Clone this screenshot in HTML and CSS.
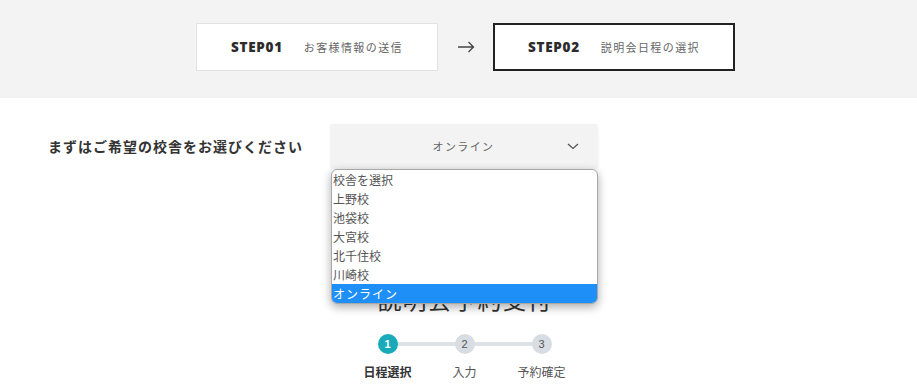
FILE: index.html
```html
<!DOCTYPE html>
<html lang="ja">
<head>
  <meta charset="UTF-8">
  <title>説明会予約</title>
  <meta name="viewport" content="width=device-width, initial-scale=1.0">
  <link rel="stylesheet" href="styles.css">
</head>
<body>
  <div class="step-band">
    <div class="step-box">
      <span class="step-no">STEP01</span>
      <span class="step-name">お客様情報の送信</span>
    </div>
    <span class="step-arrow">
      <svg width="17" height="12" viewBox="0 0 17 12"><path d="M0 6h15.5M10.5 1l5 5-5 5" fill="none" stroke="#444" stroke-width="1.3"/></svg>
    </span>
    <div class="step-box current">
      <span class="step-no">STEP02</span>
      <span class="step-name">説明会日程の選択</span>
    </div>
  </div>

  <div class="school-row">
    <div class="school-label">まずはご希望の校舎をお選びください</div>
    <div class="school-select">
      <span class="select-value">オンライン</span>
      <svg class="chevron" width="12" height="7" viewBox="0 0 12 7"><path d="M1 1l5 4.5L11 1" fill="none" stroke="#555" stroke-width="1.3"/></svg>
    </div>
    <ul class="school-menu">
      <li>校舎を選択</li>
      <li>上野校</li>
      <li>池袋校</li>
      <li>大宮校</li>
      <li>北千住校</li>
      <li>川崎校</li>
      <li class="active">オンライン</li>
    </ul>
  </div>

  <div class="reserve">
    <h2 class="reserve-title">説明会予約受付</h2>
    <ol class="progress">
      <li class="done"><span class="dot">1</span><span class="dot-label">日程選択</span></li>
      <li><span class="dot">2</span><span class="dot-label">入力</span></li>
      <li><span class="dot">3</span><span class="dot-label">予約確定</span></li>
    </ol>
  </div>
</body>
</html>
```

FILE: styles.css
```css
body { margin:0; background:#fff; color:#333; font-family:"Noto Sans CJK JP", "Noto Sans", sans-serif; }

/* 上部ステップ */
.step-band { background:#f3f3f3; height:98px; box-sizing:border-box; padding:23px 0 0 196px; display:flex; align-items:flex-start; }
.step-box { width:242px; height:48px; box-sizing:border-box; background:#fff; border:1px solid #e2e2e2; display:flex; align-items:center; justify-content:center; gap:21px; }
.step-box.current { border:2px solid #222; }
.step-no { font-family:"Open Sans", "Noto Sans", sans-serif; font-weight:800; font-size:13.5px; letter-spacing:0.7px; color:#2b2b2b; }
.step-name { font-size:11px; letter-spacing:1.4px; color:#666; }
.step-arrow { width:55px; height:48px; display:flex; align-items:center; justify-content:center; padding-left:2px; box-sizing:border-box; }

/* 校舎選択 */
.school-row { position:relative; display:flex; align-items:center; padding:26px 0 0 48px; }
.school-label { width:282px; font-size:14px; font-weight:bold; letter-spacing:1px; color:#333; }
.school-select { width:267px; height:44px; background:#f3f3f3; border-radius:2px; position:relative; display:flex; align-items:center; justify-content:center; box-shadow:1px 1px 3px #0001; }
.select-value { font-size:11px; letter-spacing:1.4px; color:#666; }
.chevron { position:absolute; right:18px; top:19px; }
.school-menu { position:absolute; left:331px; top:71px; width:265px; margin:0; padding:0; list-style:none; background:#fff; border:1px solid #a8a8a8; border-radius:6px; box-shadow:0 3px 10px #0005; overflow:hidden; z-index:10; }
.school-menu li { height:19px; line-height:19px; padding-left:1px; font-size:12px; color:#555; }
.school-menu li.active { background:#1f8ff8; color:#fff; letter-spacing:1px; }

/* 予約受付 */
.reserve { width:300px; margin:0 0 0 315px; }
.reserve-title { margin:117px 0 0 0; height:28px; line-height:28px; font-size:24px; font-weight:normal; letter-spacing:1px; text-align:center; color:#333; }
.progress { list-style:none; margin:21px 0 0 34px; padding:0; width:231px; display:grid; grid-template-columns:repeat(3, 77px); position:relative; }
.progress::before { content:""; position:absolute; left:38px; right:38px; top:8px; height:4px; background:#dde2e7; }
.progress li { display:flex; flex-direction:column; align-items:center; position:relative; }
.dot { width:20px; height:20px; border-radius:50%; background:#d7dde2; color:#555; font-size:11px; line-height:20px; text-align:center; font-family:"Liberation Sans", sans-serif; }
.done .dot { background:#18aab9; color:#fff; font-weight:bold; }
.dot-label { margin-top:9px; font-size:12px; color:#555; white-space:nowrap; }
.done .dot-label { font-weight:bold; color:#333; }
```
